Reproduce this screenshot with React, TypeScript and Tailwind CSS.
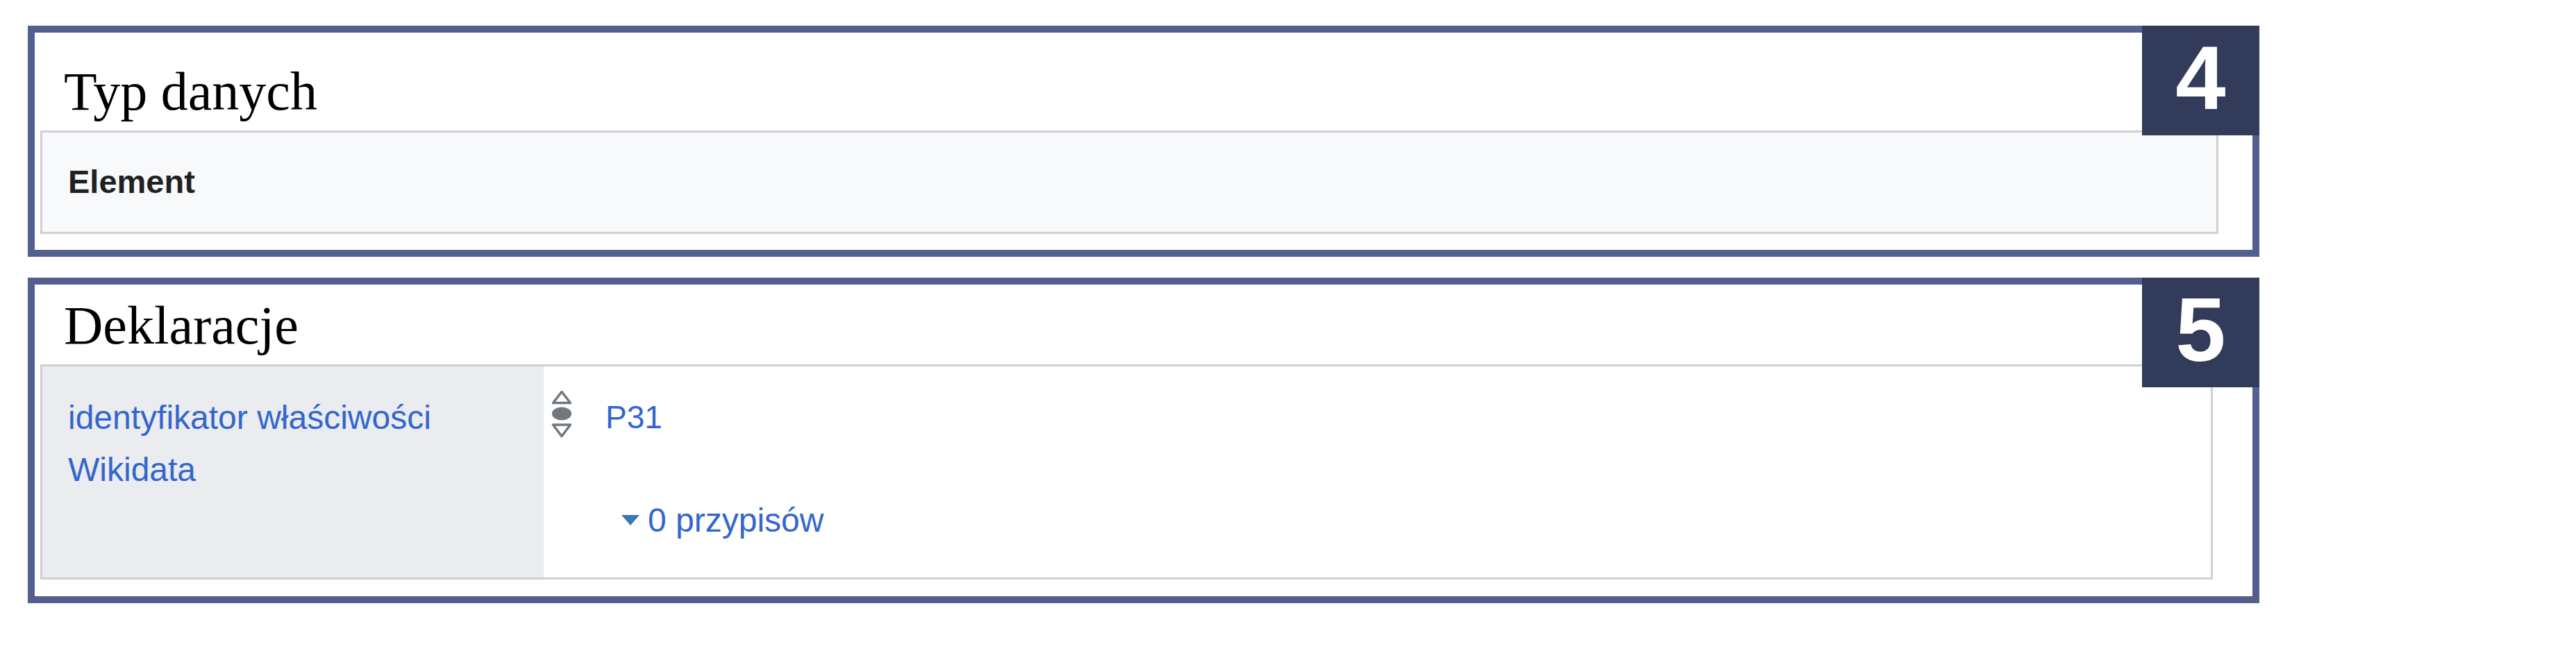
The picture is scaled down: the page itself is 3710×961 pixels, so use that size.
function RankIcon() {
  return (
    <svg width="30" height="70" viewBox="0 0 30 70" className="block">
      <path d="M15 2.5 L27.5 18.5 L2.5 18.5 Z" fill="white" stroke="#72777d" strokeWidth="3.5" strokeLinejoin="round" />
      <ellipse cx="15" cy="34" rx="14" ry="9.5" fill="#72777d" />
      <path d="M2.5 50 L27.5 50 L15 66.5 Z" fill="white" stroke="#72777d" strokeWidth="3.5" strokeLinejoin="round" />
    </svg>
  );
}

function Badge({ n }: { n: string }) {
  return (
    <div className="absolute -top-[10px] -right-[10px] w-[169px] h-[158px] bg-[#323b5a] flex items-center justify-center pb-[8px]">
      <span className="text-white font-bold text-[130px] leading-none">{n}</span>
    </div>
  );
}

export default function App() {
  return (
    <div className="w-[3710px] h-[961px] bg-white pt-[37px] pl-[40px] font-['Liberation_Sans',Arial,sans-serif] text-[#202122]">
      {/* Datatype section */}
      <section className="relative w-[3214px] h-[333px] border-[10px] border-[#53608f] flex flex-col">
        <div className="h-[141px] pt-[26px] pl-[42px]">
          <h2 className="font-['Liberation_Serif',serif] text-[78px] leading-normal text-black">Typ danych</h2>
        </div>
        <div className="ml-[8px] w-[3137px] h-[149px] border-[3px] border-[#cdd0d5] bg-[#f8f9fa] flex items-center pl-[37px]">
          <span className="font-bold text-[47px] text-[#202122]">Element</span>
        </div>
        <Badge n="4" />
      </section>

      {/* Statements section */}
      <section className="relative mt-[30px] w-[3214px] h-[469px] border-[10px] border-[#53608f] flex flex-col">
        <div className="h-[115px] pl-[42px]">
          <h2 className="font-['Liberation_Serif',serif] text-[78px] leading-normal text-black">Deklaracje</h2>
        </div>
        <div className="ml-[8px] w-[3129px] h-[310px] border-[3px] border-[#cdd0d5] flex">
          <div className="w-[722px] bg-[#eaecf0] pl-[37px] pr-[30px] pt-[36px] text-[48px] leading-[75px] text-[#3366cc]">
            identyfikator właściwości Wikidata
          </div>
          <div className="flex-1 bg-white flex pl-[11px] pt-[34px]">
            <RankIcon />
            <div className="pl-[48px] text-[46px] leading-[75px] text-[#3366cc]">
              <div className="pt-[2px]">P31</div>
              <div className="mt-[73px] flex items-center pl-[23px] text-[48px]">
                <svg width="26" height="16" viewBox="0 0 26 16" className="mr-[12px]">
                  <path d="M0 0 H26 L13 15 Z" fill="#3a78b8" />
                </svg>
                <span>0 przypisów</span>
              </div>
            </div>
          </div>
        </div>
        <Badge n="5" />
      </section>
    </div>
  );
}
